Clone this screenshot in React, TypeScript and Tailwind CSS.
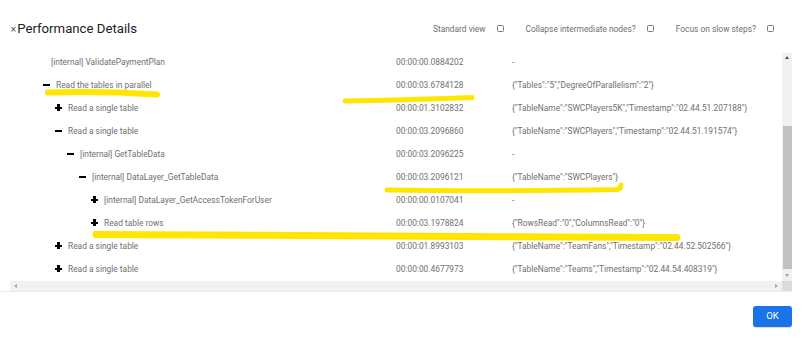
import React from 'react';

type Row = { pad: number; icon: 'plus' | 'minus' | null; name: string; time: string; detail: string };

const ROWS: Row[] = [
  { pad: 41, icon: null, name: '[internal] ValidatePaymentPlan', time: '00:00:00.0884202', detail: '-' },
  { pad: 33, icon: 'minus', name: 'Read the tables in parallel', time: '00:00:03.6784128', detail: '{"Tables":"5","DegreeOfParallelism":"2"}' },
  { pad: 45, icon: 'plus', name: 'Read a single table', time: '00:00:01.3102832', detail: '{"TableName":"SWCPlayers5K","Timestamp":"02.44.51.207188"}' },
  { pad: 45, icon: 'minus', name: 'Read a single table', time: '00:00:03.2096860', detail: '{"TableName":"SWCPlayers","Timestamp":"02.44.51.191574"}' },
  { pad: 57, icon: 'minus', name: '[internal] GetTableData', time: '00:00:03.2096225', detail: '-' },
  { pad: 69, icon: 'minus', name: '[internal] DataLayer_GetTableData', time: '00:00:03.2096121', detail: '{"TableName":"SWCPlayers"}' },
  { pad: 81, icon: 'plus', name: '[internal] DataLayer_GetAccessTokenForUser', time: '00:00:00.0107041', detail: '-' },
  { pad: 81, icon: 'plus', name: 'Read table rows', time: '00:00:03.1978824', detail: '{"RowsRead":"0","ColumnsRead":"0"}' },
  { pad: 45, icon: 'plus', name: 'Read a single table', time: '00:00:01.8993103', detail: '{"TableName":"TeamFans","Timestamp":"02.44.52.502566"}' },
  { pad: 45, icon: 'plus', name: 'Read a single table', time: '00:00:00.4677973', detail: '{"TableName":"Teams","Timestamp":"02.44.54.408319"}' },
];

function TreeIcon({ kind }: { kind: 'plus' | 'minus' }) {
  return (
    <span className="relative w-[7px] h-[7px] mr-[6px] shrink-0">
      <span className="absolute left-0 top-[2.5px] w-[7px] h-[2.5px] bg-black" />
      {kind === 'plus' && <span className="absolute top-0 left-[2.25px] w-[2.5px] h-[7px] bg-black" />}
    </span>
  );
}

function Check({ label }: { label: string }) {
  return (
    <div className="flex items-center">
      <span>{label}</span>
      <span className="ml-[11px] w-[7px] h-[7px] border border-[#7a7a7a] rounded-[1.5px] bg-white" />
    </div>
  );
}

export default function App() {
  return (
    <div
      className="relative w-[803px] h-[338px] bg-white overflow-hidden"
      style={{ fontFamily: 'Roboto, "Liberation Sans", sans-serif' }}
    >
      {/* Header */}
      <div className="h-[53px] pt-[20px] flex items-start justify-between pl-[10px] pr-[29px]">
        <div className="h-[18px] flex items-center text-[#202124]">
          <span className="text-[8px] leading-none mt-[1px] mr-[0.5px] text-[#303030]" style={{ fontFamily: '"DejaVu Sans", sans-serif' }}>×</span>
          <span className="text-[13.2px] leading-none">Performance Details</span>
        </div>
        <div className="h-[18px] flex items-center gap-[22px] text-[8.4px] text-[#6f6f6f]">
          <Check label="Standard view" />
          <Check label="Collapse intermediate nodes?" />
          <Check label="Focus on slow steps?" />
        </div>
      </div>

      {/* Scroll area */}
      <div className="ml-[10px] w-[782px] h-[238px] flex flex-col">
        <div className="flex h-[228px]">
          <div className="w-[772px] h-[228px] overflow-hidden">
            <div className="-mt-[2.5px] text-[8.4px] text-[#707070]">
              {ROWS.map((r, i) => (
                <div key={i} className="h-[23px] flex items-center whitespace-nowrap">
                  <div className="w-[386px] flex items-center" style={{ paddingLeft: r.pad }}>
                    {r.icon && <TreeIcon kind={r.icon} />}
                    <span>{r.name}</span>
                  </div>
                  <div className="w-[116px]">{r.time}</div>
                  <div>{r.detail}</div>
                </div>
              ))}
            </div>
          </div>
          {/* vertical scrollbar */}
          <div className="w-[10px] h-[228px] bg-[#f1f1f1] flex flex-col items-center">
            <div className="h-[8px] flex items-center justify-center">
              <span className="w-0 h-0 border-l-[2.5px] border-r-[2.5px] border-b-[3px] border-l-transparent border-r-transparent border-b-[#505050]" />
            </div>
            <div className="h-[65px]" />
            <div className="w-[9px] h-[143px] bg-[#c1c1c1]" />
            <div className="flex-1 flex items-center justify-center">
              <span className="w-0 h-0 border-l-[2.5px] border-r-[2.5px] border-t-[3px] border-l-transparent border-r-transparent border-t-[#a3a3a3]" />
            </div>
          </div>
        </div>
        {/* horizontal scrollbar */}
        <div className="flex h-[10px]">
          <div className="w-[772px] h-[10px] bg-[#f1f1f1] flex items-center justify-between px-[4px]">
            <span className="w-0 h-0 border-t-[2.5px] border-b-[2.5px] border-r-[3px] border-t-transparent border-b-transparent border-r-[#a3a3a3]" />
            <span className="w-0 h-0 border-t-[2.5px] border-b-[2.5px] border-l-[3px] border-t-transparent border-b-transparent border-l-[#a3a3a3]" />
          </div>
          <div className="w-[10px] h-[10px] bg-[#dcdcdc]" />
        </div>
      </div>
      <div className="h-px w-[792px] bg-[#ececec]" />

      {/* Footer */}
      <div className="flex justify-end pr-[11px] pt-[14px]">
        <button className="w-[39px] h-[21px] rounded-[3px] bg-[#1a73e8] text-white text-[9.5px] shadow-[0_1px_1px_rgba(0,0,0,0.15)]">
          OK
        </button>
      </div>

      {/* Highlighter marks */}
      <svg className="absolute inset-0 pointer-events-none" width="803" height="338" viewBox="0 0 803 338">
        <g fill="none" stroke="#ffe500" strokeLinecap="round" strokeLinejoin="round">
          <path d="M48 92.5 C 90 91.5, 125 92.5, 157 94.5" strokeWidth="6" />
          <path d="M345 101 C 390 100.5, 430 99, 472 97.5" strokeWidth="5" />
          <path d="M387 190 C 450 191, 560 190.5, 617 189.5 C 620 189, 621 187, 621 185" strokeWidth="5" />
          <path d="M96 234.5 C 300 235.5, 500 237.5, 677 237.5" strokeWidth="7" />
        </g>
      </svg>
    </div>
  );
}
